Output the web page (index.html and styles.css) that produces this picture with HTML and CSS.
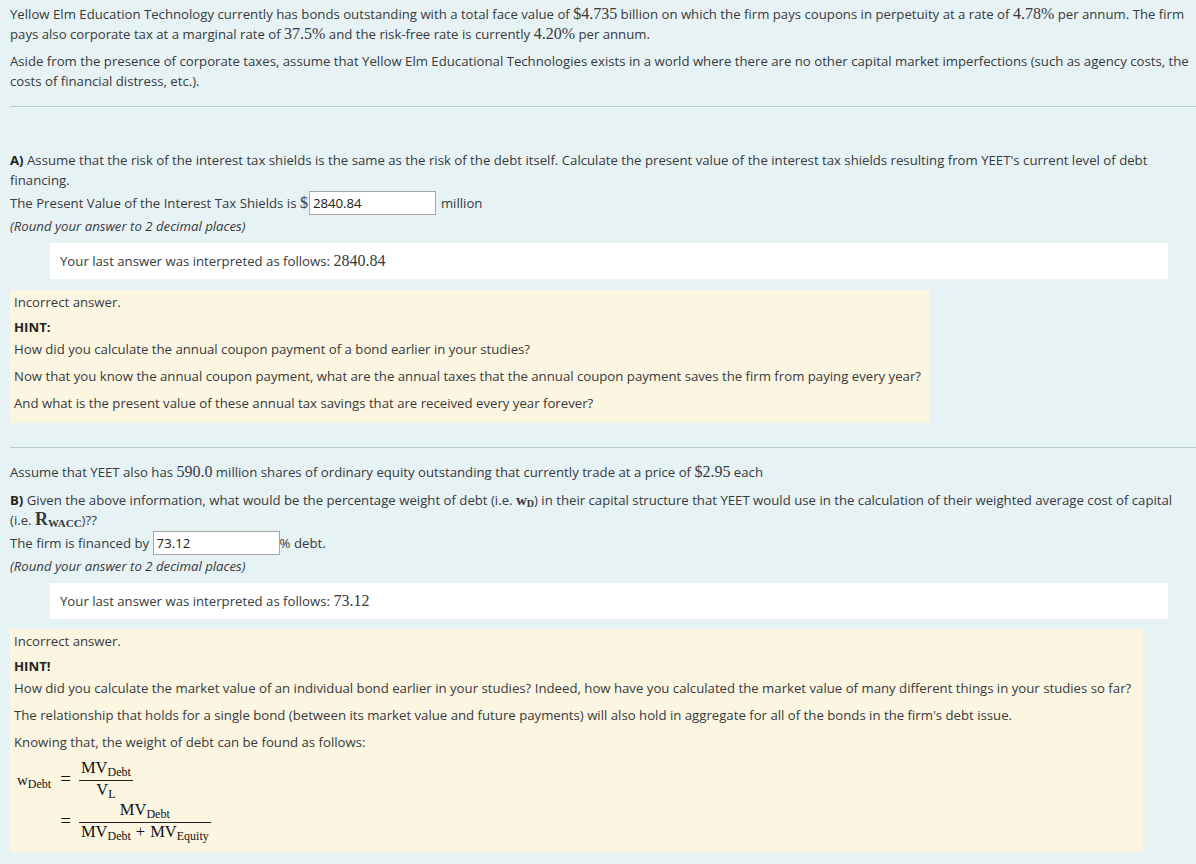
FILE: index.html
```html
<!DOCTYPE html>
<html>
<head>
<meta charset="utf-8">
<link rel="stylesheet" href="styles.css">
</head>
<body>
<div class="page">
  <p class="p">Yellow Elm Education Technology currently has bonds outstanding with a total face value of <span class="m">$4.735</span> billion on which the firm pays coupons in perpetuity at a rate of <span class="m">4.78%</span> per annum. The firm pays also corporate tax at a marginal rate of <span class="m">37.5%</span> and the risk-free rate is currently <span class="m">4.20%</span> per annum.</p>
  <p class="p">Aside from the presence of corporate taxes, assume that Yellow Elm Educational Technologies exists in a world where there are no other capital market imperfections (such as agency costs, the costs of financial distress, etc.).</p>
  <hr class="sep sep1">

  <p class="p q"><b>A)</b> Assume that the risk of the interest tax shields is the same as the risk of the debt itself. Calculate the present value of the interest tax shields resulting from YEET's current level of debt financing.</p>
  <div class="ans">The Present Value of the Interest Tax Shields is <span class="m dollar">$</span><span class="inp inp1">2840.84</span><span class="unit">million</span></div>
  <p class="p round"><i>(Round your answer to 2 decimal places)</i></p>
  <div class="interp interp1">Your last answer was interpreted as follows: <span class="m">2840.84</span></div>

  <div class="hint hint1">
    <p class="h-inc">Incorrect answer.</p>
    <p class="h-title">HINT:</p>
    <p class="h-line first">How did you calculate the annual coupon payment of a bond earlier in your studies?</p>
    <p class="h-line">Now that you know the annual coupon payment, what are the annual taxes that the annual coupon payment saves the firm from paying every year?</p>
    <p class="h-line">And what is the present value of these annual tax savings that are received every year forever?</p>
  </div>
  <hr class="sep sep2">

  <p class="p pa">Assume that YEET also has <span class="m">590.0</span> million shares of ordinary equity outstanding that currently trade at a price of <span class="m">$2.95</span> each</p>
  <p class="p q"><b>B)</b> Given the above information, what would be the percentage weight of debt (i.e. <span class="mb">w<sub>D</sub></span>) in their capital structure that YEET would use in the calculation of their weighted average cost of capital (i.e.&nbsp;<span class="mr">R<sub>WACC</sub></span>)??</p>
  <div class="ans">The firm is financed by <span class="inp inp2">73.12</span><span>% debt.</span></div>
  <p class="p round"><i>(Round your answer to 2 decimal places)</i></p>
  <div class="interp interp2">Your last answer was interpreted as follows: <span class="m">73.12</span></div>

  <div class="hint hint2">
    <p class="h-inc">Incorrect answer.</p>
    <p class="h-title">HINT!</p>
    <p class="h-line first">How did you calculate the market value of an individual bond earlier in your studies? Indeed, how have you calculated the market value of many different things in your studies so far?</p>
    <p class="h-line">The relationship that holds for a single bond (between its market value and future payments) will also hold in aggregate for all of the bonds in the firm's debt issue.</p>
    <p class="h-line">Knowing that, the weight of debt can be found as follows:</p>
    <div class="formula">
      <div class="lhs">w<sub>Debt</sub></div>
      <div class="eq">=</div>
      <div class="frac">
        <div class="num">MV<sub>Debt</sub></div>
        <div class="den">V<sub>L</sub></div>
      </div>
      <div class="lhs"></div>
      <div class="eq">=</div>
      <div class="frac">
        <div class="num">MV<sub>Debt</sub></div>
        <div class="den">MV<sub>Debt</sub><span class="plus">+</span>MV<sub>Equity</sub></div>
      </div>
    </div>
  </div>
</div>
</body>
</html>
```

FILE: styles.css
```css
html, body {
  margin: 0;
  padding: 0;
  background: #e7f2f5;
}
body {
  font-family: "Open Sans", "Liberation Sans", sans-serif;
  font-size: 13.2px;
  color: #373a3c;
}
.page {
  padding: 4px 0 14px 10px;
}
.p {
  margin: 0 0 7px 0;
  line-height: 20px;
}
.m {
  font-family: "Liberation Serif", "DejaVu Serif", serif;
  font-size: 16px;
}
.mb {
  font-family: "Liberation Serif", serif;
  font-weight: bold;
  font-size: 15px;
}
.mb sub, .mr sub {
  font-size: 10px;
  vertical-align: -2px;
  line-height: 0;
}
.mr {
  font-family: "Liberation Serif", serif;
  font-weight: bold;
  font-size: 18px;
  line-height: 0;
}
.mr sub { font-size: 11px; }
.sep {
  border: 0;
  border-top: 1px solid #b3ccd4;
  margin: 0;
}
.sep1 { margin-top: 15px; margin-bottom: 43px; }
.sep2 { margin-top: 24px; margin-bottom: 14px; }
.pa { margin-bottom: 8px; }
.q { margin-bottom: 0; }
.q b { color: #222; }
.ans {
  display: flex;
  align-items: center;
  height: 26px;
  white-space: pre;
}
.dollar { margin-right: 1px; }
.inp {
  display: block;
  box-sizing: border-box;
  height: 24px;
  line-height: 22px;
  border: 1px solid #a7a7a7;
  background: #fff;
  padding: 0 3px;
  color: #222;
  width: 127px;
}
.unit { margin-left: 5px; }
.round { margin-bottom: 7px; }
.interp {
  margin: 0 28px 11px 40px;
  background: #fff;
  padding: 8px 10px;
  line-height: 19px;
}
.interp2 { margin-bottom: 10px; }
.hint {
  display: table;
  background: #fcf5e1;
  padding: 3px 9px 2px 4px;
}
.hint2 { padding-right: 12px; }
.hint p { margin: 0; line-height: 19px; }
.h-inc { margin-bottom: 6px !important; }
.h-title { font-weight: bold; color: #222; }
.h-line { margin-bottom: 8px !important; }
.h-line.first { margin-top: 3px !important; }
.formula {
  display: grid;
  grid-template-columns: auto auto auto;
  justify-content: start;
  align-items: center;
  row-gap: 4px;
  font-family: "Liberation Serif", "DejaVu Serif", serif;
  font-size: 16.5px;
  color: #111;
  margin: 1px 0 10px 3px;
}
.formula sub { font-size: 12px; vertical-align: -3px; line-height: 0; }
.lhs { font-size: 15px; padding-top: 2px; }
.lhs sub { font-size: 12px; }
.eq { padding: 0 8px 0 9px; font-size: 19px; }
.plus { padding: 0 5px; }
.frac {
  justify-self: start;
  display: flex;
  flex-direction: column;
  align-items: center;
}
.num { line-height: 16px; padding: 0 2px 4px; }
.den {
  border-top: 1px solid #222;
  line-height: 17px;
  padding: 0 2px;
  align-self: stretch;
  text-align: center;
}
```
